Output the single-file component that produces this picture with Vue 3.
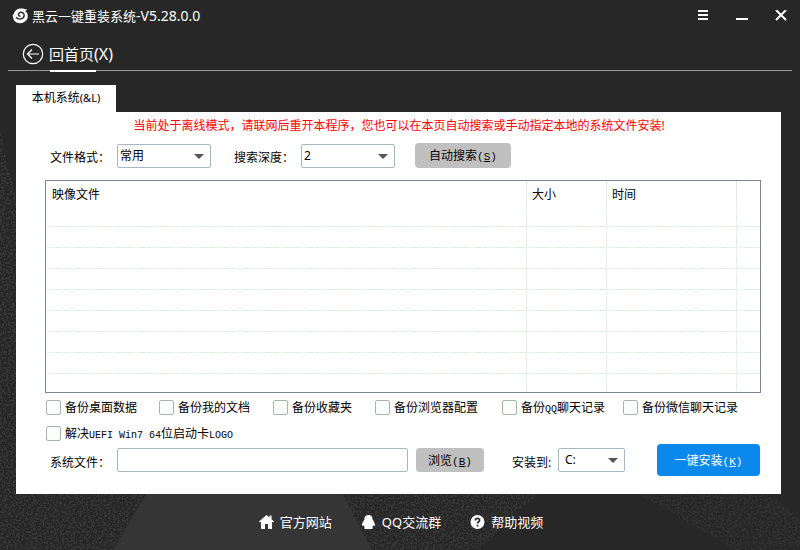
<script setup>
import { ref } from 'vue'

const format = ref('常用')
const depth = ref('2')
const drive = ref('C:')
const filePath = ref('')

const backups = ref([
  { id: 'desktop', before: '备份桌面数据', latin: '', after: '', on: false },
  { id: 'docs', before: '备份我的文档', latin: '', after: '', on: false },
  { id: 'favorites', before: '备份收藏夹', latin: '', after: '', on: false },
  { id: 'browser', before: '备份浏览器配置', latin: '', after: '', on: false },
  { id: 'qq', before: '备份', latin: 'QQ', after: '聊天记录', on: false },
  { id: 'wechat', before: '备份微信聊天记录', latin: '', after: '', on: false }
])
const uefiFix = ref(false)
</script>

<template>
  <div class="window">
    <svg class="backdrop" viewBox="0 0 800 550" preserveAspectRatio="none" aria-hidden="true">
      <defs>
        <filter id="speckle" x="0" y="0" width="100%" height="100%" color-interpolation-filters="sRGB">
          <feTurbulence type="fractalNoise" baseFrequency="0.45" numOctaves="2" seed="4" />
          <feColorMatrix values="0 0 0 0 0.208  0 0 0 0 0.208  0 0 0 0 0.208  16 0 0 0 -8" />
          <feComposite in2="SourceGraphic" operator="in" />
        </filter>
      </defs>
      <path class="grain" d="M0 130L16 200V494H145L113 550H0Z" />
      <path class="grain" d="M343 494H538L478 550H372Z" />
      <path class="grain faint" d="M640 494H770L800 520V550H735Z" />
      <path class="beam" d="M146 494H343L372 550H113Z" />
    </svg>

    <header class="titlebar">
      <svg class="logo" viewBox="0 0 16 16" aria-hidden="true">
        <path d="M14.6 1.2C13.3 2 12.6 1 10.2.6 5.2-.2 1.9 2.6 1.5 5.8 0 6.6-.2 8 .6 9.3c.2 3.7 3.4 6.1 7.2 5.9 4.5-.2 7.6-3.2 7.5-7.3-.1-2.5-1.3-4.2-3.1-5 1.2.1 2-.5 2.4-1.7z" />
        <path class="swirl" d="M3.6 9.3C6 12.3 11.4 11.3 11.7 7.4C11.7 4.3 8 3.4 6.3 5.4C5.3 6.9 6.4 8.5 8 8" />
      </svg>
      <h1>黑云一键重装系统<span>-V5.28.0.0</span></h1>
      <div class="controls">
        <button type="button" aria-label="菜单">
          <svg viewBox="0 0 12 12"><path d="M1 1h10M1 5h10M1 9h10" /></svg>
        </button>
        <button type="button" aria-label="最小化">
          <svg viewBox="0 0 12 12"><path d="M0 9h12" /></svg>
        </button>
        <button type="button" aria-label="关闭">
          <svg viewBox="0 0 12 12"><path d="M1 0l10 10M11 0L1 10" /></svg>
        </button>
      </div>
    </header>

    <nav class="nav">
      <a href="#home">
        <svg viewBox="0 0 22 22" aria-hidden="true">
          <circle cx="11" cy="11" r="9.7" />
          <path d="M17 11H5.5M10 6.5L5.5 11L10 15.5" />
        </svg>
        <span class="nav-text">回首页<span class="latin">(X)</span></span>
      </a>
    </nav>

    <main>
      <div class="tabs" role="tablist">
        <button type="button" class="tab" role="tab" aria-selected="true">本机系统<span>(&amp;L)</span></button>
      </div>

      <section class="panel">
        <p class="notice">当前处于离线模式，请联网后重开本程序，您也可以在本页自动搜索或手动指定本地的系统文件安装!</p>

        <div class="search-row">
          <label for="format">文件格式：</label>
          <span class="select">
            <select id="format" v-model="format"><option>常用</option></select>
            <svg viewBox="0 0 10 5" aria-hidden="true"><path d="M0 0h10L5 5z" /></svg>
          </span>
          <label for="depth" class="depth-label">搜索深度：</label>
          <span class="select">
            <select id="depth" v-model="depth"><option>2</option></select>
            <svg viewBox="0 0 10 5" aria-hidden="true"><path d="M0 0h10L5 5z" /></svg>
          </span>
          <button type="button" class="grey search">自动搜索<span class="key">(<u>S</u>)</span></button>
        </div>

        <div class="list">
          <table>
            <colgroup><col /><col class="size" /><col class="time" /><col class="rest" /></colgroup>
            <thead>
              <tr><th>映像文件</th><th>大小</th><th>时间</th><th></th></tr>
            </thead>
            <tbody>
              <tr v-for="n in 9" :key="n"><td v-for="c in 4" :key="c"></td></tr>
            </tbody>
          </table>
        </div>

        <div class="checks">
          <label v-for="b in backups" :key="b.id">
            <input v-model="b.on" type="checkbox" />
            <span class="check-text">{{ b.before }}<span class="mono">{{ b.latin }}</span>{{ b.after }}</span>
          </label>
        </div>
        <div class="checks second">
          <label>
            <input v-model="uefiFix" type="checkbox" />
            <span class="check-text">解决<span class="mono">UEFI Win7 64</span>位启动卡<span class="mono">LOGO</span></span>
          </label>
        </div>

        <div class="install-row">
          <label for="file">系统文件：</label>
          <input id="file" v-model="filePath" type="text" />
          <button type="button" class="grey browse">浏览<span class="key">(<u>B</u>)</span></button>
          <label for="drive" class="drive-label">安装到:</label>
          <span class="select narrow">
            <select id="drive" v-model="drive"><option>C:</option></select>
            <svg viewBox="0 0 10 5" aria-hidden="true"><path d="M0 0h10L5 5z" /></svg>
          </span>
          <button type="button" class="primary">一键安装<span class="key">(<u>K</u>)</span></button>
        </div>
      </section>
    </main>

    <footer>
      <a href="#site">
        <svg viewBox="0 0 15 14" aria-hidden="true">
          <path d="M7.5 0L0 6.5L1 7.5L2 6.8V14H6V9H9V14H13V6.8L14 7.5L15 6.5L12.5 4.3V.5H10.5V2.6Z" />
        </svg>官方网站
      </a>
      <a href="#group">
        <svg viewBox="0 0 15 14" aria-hidden="true">
          <path d="M7.5 0C4.8 0 3.3 2 3.4 4.6C2.5 6.2 1 8.2 1 10.3C1.1 11.4 1.8 11 2.6 10.2C2.8 11 3.2 11.6 3.8 12.1C2.9 12.6 2.8 14 4.5 14H10.5C12.2 14 12.1 12.6 11.2 12.1C11.8 11.6 12.2 11 12.4 10.2C13.2 11 13.9 11.4 14 10.3C14 8.2 12.5 6.2 11.6 4.6C11.7 2 10.2 0 7.5 0Z" />
        </svg>QQ交流群
      </a>
      <a href="#help">
        <svg viewBox="0 0 15 14" aria-hidden="true">
          <circle cx="7.5" cy="7" r="7" />
          <path class="mark" d="M5.4 5.6C5.4 2.5 9.7 2.7 9.6 5.3C9.6 6.8 7.5 6.8 7.5 8.6M7.5 9.7V11.4" />
        </svg>帮助视频
      </a>
    </footer>
  </div>
</template>

<style>
body {
  margin: 0;
  background: #272727;
}
</style>

<style scoped>
.window {
  position: relative;
  display: flex;
  flex-direction: column;
  box-sizing: border-box;
  min-height: 100vh;
  background: #272727;
  color: #000;
  font: 12px/18px "Noto Sans", "Noto Sans CJK SC", sans-serif;
}
.window > * {
  position: relative;
}
.window > .backdrop {
  position: absolute;
  inset: 0;
  width: 100%;
  height: 100%;
}
.grain {
  fill: #353535;
  filter: url(#speckle);
}
.faint {
  opacity: 0.7;
}
.beam {
  fill: #353535;
}
button,
input,
select {
  margin: 0;
  font: inherit;
  color: inherit;
}
button {
  padding: 0;
  border: 0;
  background: none;
}
a {
  color: #fff;
  text-decoration: none;
}
.mono,
.key {
  font-family: "Liberation Mono", monospace;
  font-size: 10px;
}
.key {
  font-size: 11px;
}

.titlebar {
  display: flex;
  align-items: center;
  height: 32px;
  padding: 0 13px 0 12px;
  color: #fff;
}
.logo {
  width: 17px;
  height: 16px;
  margin-right: 3px;
  fill: #fff;
}
.swirl {
  fill: none;
  stroke: #272727;
  stroke-width: 1.4;
}
h1 {
  flex: 1;
  margin: 0;
  font-size: 13px;
  font-weight: 400;
}
h1 span {
  font-size: 14px;
}
.controls {
  display: flex;
  gap: 27px;
}
.controls button {
  display: flex;
}
.controls svg {
  width: 12px;
  height: 12px;
  fill: none;
  stroke: #fff;
  stroke-width: 2;
}

.nav {
  display: flex;
  height: 38px;
  margin: 0 8px;
  padding-left: 14px;
  border-bottom: 1px solid #999;
}
.nav a {
  display: flex;
  gap: 5px;
  align-items: center;
  height: 38px;
  padding-top: 3px;
  font-size: 15px;
}
.nav svg {
  width: 22px;
  height: 22px;
  fill: none;
  stroke: #fff;
  stroke-width: 1.2;
}
.nav-text {
  align-self: stretch;
  line-height: 38px;
  background: linear-gradient(#fff, #fff) 1px 35px / 46px 2px no-repeat;
}
.nav .latin {
  font-size: 16px;
}

main {
  display: flex;
  flex: 1;
  flex-direction: column;
  padding: 14px 19px 0 16px;
}
.tabs {
  display: flex;
}
.tab {
  width: 100px;
  height: 27px;
  padding-bottom: 2px;
  background: #fff;
}
.tab span {
  font-size: 11px;
}
.panel {
  display: flex;
  flex: 1;
  flex-direction: column;
  padding: 5px 20px 18px 29px;
  background: #fff;
}
.notice {
  margin: 0 0 8px;
  padding-right: 8px;
  color: #f00;
  text-align: center;
}
.search-row,
.install-row {
  display: flex;
  align-items: center;
  padding: 0 1px 0 5px;
}
.search-row label,
.install-row > label {
  width: 67px;
  padding-top: 4px;
}
.install-row > label {
  padding-top: 6px;
}
.search-row .depth-label {
  margin-left: 23px;
}
.select {
  display: grid;
  width: 94px;
  height: 24px;
}
.select.narrow {
  width: 67px;
}
.select select,
.select svg {
  grid-area: 1 / 1;
}
.select select {
  width: 100%;
  padding: 0 16px 0 2px;
  border: 1px solid #a5b9c4;
  border-radius: 2px;
  background: #fff;
  appearance: none;
}
.select.narrow select {
  padding-left: 6px;
}
.select svg {
  place-self: center end;
  width: 10px;
  height: 5px;
  margin: 1px 7px 0 0;
  fill: #555;
  pointer-events: none;
}
.grey {
  padding-top: 2px;
  border-radius: 4px;
  background: #c0c0c0;
}
.search {
  width: 96px;
  height: 25px;
  margin-left: 20px;
}

.list {
  display: flex;
  flex: 1;
  min-height: 211px;
  margin: 12px 0 7px;
  border: 1px solid #7f848e;
}
table {
  width: 100%;
  table-layout: fixed;
  border-collapse: separate;
  border-spacing: 0;
}
.size {
  width: 80px;
}
.time {
  width: 130px;
}
.rest {
  width: 23px;
}
th {
  height: 23px;
  padding: 2px 5px 0;
  border-right: 1px solid #e5e5e5;
  font-weight: 400;
  text-align: left;
}
th:first-child {
  padding-left: 6px;
}
th:last-child {
  border: 0;
}
td {
  height: 21px;
  padding: 0;
  background:
    repeating-linear-gradient(90deg, #e4f8e8 0 9px, #e2e6e6 9px 15px, #e4f8e8 15px 18px, #e2e6e6 18px 21px) 0 100% / 100% 1px no-repeat,
    repeating-linear-gradient(#e4f8e8 0 9px, #e2e6e6 9px 15px, #e4f8e8 15px 18px, #e2e6e6 18px 21px) 100% 0 / 1px 100% no-repeat;
}
td:last-child {
  background-size: 100% 1px, 0 0;
}
tr:last-child td {
  height: 18px;
  background-size: 0 0, 1px 100%;
}
tr:last-child td:last-child {
  background: none;
}

.checks {
  display: grid;
  grid-template-columns: 113px 114px 102px 127px 121px auto;
  padding-left: 1px;
}
.checks label {
  display: flex;
  gap: 4px;
  align-items: center;
  height: 15px;
  white-space: nowrap;
}
.check-text {
  padding-top: 2px;
}
.checks input {
  width: 15px;
  height: 15px;
  border: 1px solid #a9b5ac;
  border-radius: 2px;
  background: #fbfffb;
  appearance: none;
}
.checks input:checked {
  background: #0b88ec;
}
.checks.second {
  grid-template-columns: auto;
  margin: 11px 0 3px;
}
.install-row input {
  flex: 1;
  box-sizing: border-box;
  min-width: 0;
  height: 24px;
  padding: 0 4px;
  border: 1px solid #a5b9c4;
  border-radius: 2px;
  background: #fff;
}
.browse {
  width: 68px;
  height: 24px;
  margin-left: 8px;
}
.install-row .drive-label {
  width: 46px;
  margin-left: 28px;
}
.primary {
  width: 103px;
  height: 32px;
  margin-left: 32px;
  padding-top: 2px;
  border-radius: 4px;
  background: #0b88ec;
  color: #fff;
}

footer {
  display: flex;
  gap: 29px;
  align-items: center;
  justify-content: center;
  height: 56px;
  padding-left: 2px;
  font-size: 13px;
}
footer a {
  display: flex;
  gap: 6px;
  align-items: center;
}
footer svg {
  width: 15px;
  height: 14px;
  fill: #fff;
}
footer .mark {
  fill: none;
  stroke: #272727;
  stroke-width: 1.7;
}
</style>
